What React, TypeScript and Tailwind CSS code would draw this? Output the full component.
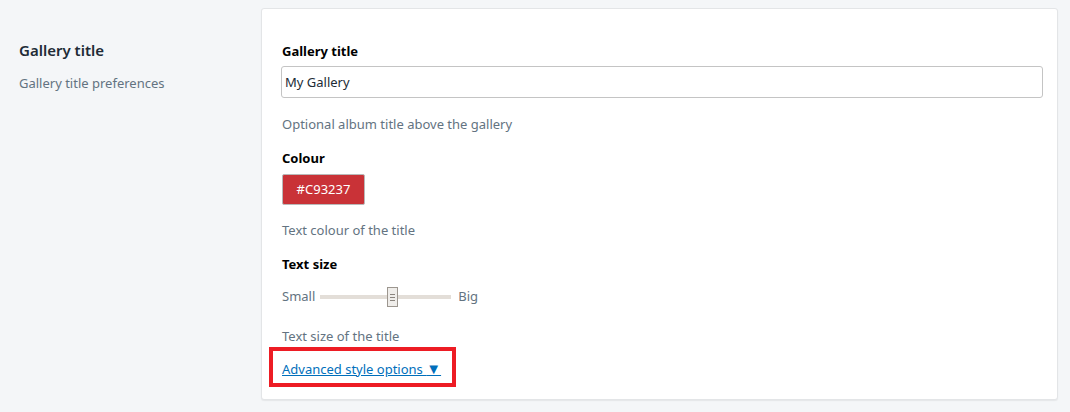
import { useState } from "react";

const App = () => {
  const [title, setTitle] = useState("My Gallery");
  const [size, setSize] = useState(56);

  return (
    <div
      className="w-[1070px] h-[412px] bg-[#f4f6f8] flex items-start pt-2 overflow-hidden"
      style={{ fontFamily: '"Segoe UI", "Noto Sans", sans-serif' }}
    >
      <div className="w-[261px] pl-[19px] pt-[32px] shrink-0">
        <div className="text-[15px] font-semibold text-[#212b36] leading-5">Gallery title</div>
        <div className="mt-[13px] text-[13px] text-[#637381] leading-5">Gallery title preferences</div>
      </div>

      <div className="w-[797px] h-[392px] bg-white rounded-[3px] border border-[#e3e5e7] shadow-[0_1px_1px_rgba(63,63,68,0.08)] px-[20px] pt-[32px]">
        <div className="text-[13px] font-bold text-black leading-5">Gallery title</div>
        <input
          value={title}
          onChange={(e) => setTitle(e.target.value)}
          className="mt-[5px] -ml-px w-[762px] h-[32px] border border-[#c4c4c4] rounded-[3px] px-[3px] text-[13px] text-[#212b36] outline-none"
        />
        <div className="mt-[16px] text-[13px] text-[#637381] leading-5">Optional album title above the gallery</div>

        <div className="mt-[14px] text-[13px] font-bold text-black leading-5">Colour</div>
        <button className="mt-[6px] w-[83px] h-[31px] bg-[#C93237] border border-[#b9b9b9] rounded-[2px] text-white text-[13px]">
          #C93237
        </button>
        <div className="mt-[15px] text-[13px] text-[#637381] leading-5">Text colour of the title</div>

        <div className="mt-[14px] text-[13px] font-bold text-black leading-5">Text size</div>
        <div className="mt-[13px] flex items-center h-[20px] text-[13px] text-[#637381]">
          <span>Small</span>
          <div className="relative ml-[5px] w-[131px] h-[20px] flex items-center">
            <div className="w-full h-[4px] bg-[#e3ded8]" />
            <input
              type="range"
              min={0}
              max={100}
              value={size}
              onChange={(e) => setSize(Number(e.target.value))}
              className="absolute inset-0 opacity-0 cursor-pointer"
            />
            <div
              className="absolute top-0 w-[11px] h-[20px] bg-[#efedea] border border-[#9c968f] flex flex-col items-center justify-center gap-[2px]"
              style={{ left: `${(size / 100) * 120}px` }}
            >
              <div className="w-[5px] h-px bg-[#8a847e]" />
              <div className="w-[5px] h-px bg-[#8a847e]" />
              <div className="w-[5px] h-px bg-[#8a847e]" />
            </div>
          </div>
          <span className="ml-[7px]">Big</span>
        </div>
        <div className="mt-[19px] text-[13px] text-[#637381] leading-5">Text size of the title</div>

        <div className="mt-px -ml-[13px] w-[187px] h-[40px] border-[4px] border-[#ed1c24] flex items-center pl-[9px] pt-[3px]">
          <a href="#" className="text-[13px] text-[#006fbb] underline leading-5">
            Advanced style options <span className="text-[15px]">▼</span>
          </a>
        </div>
      </div>
    </div>
  );
};

export default App;
